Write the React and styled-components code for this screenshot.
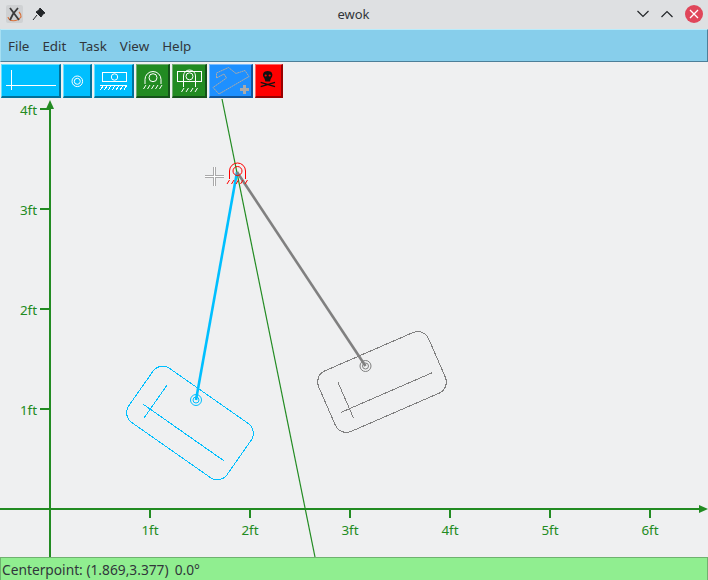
import React from 'react';
import styled, { createGlobalStyle } from 'styled-components';

const GlobalStyle = createGlobalStyle`
  html, body { margin: 0; padding: 0; background: #eff0f1; }
  body { font-family: "Noto Sans", sans-serif; overflow: hidden; }
`;

const Window = styled.div`
  width: 708px;
  height: 580px;
  display: flex;
  flex-direction: column;
  color: #31363b;
`;

const TitleBar = styled.header`
  height: 29px;
  flex: none;
  box-sizing: border-box;
  display: flex;
  align-items: center;
  padding: 0 5px 1px 6px;
  gap: 9px;
  background: #dee0e2;
`;

const Title = styled.div`
  flex: 1;
  text-align: center;
  font-size: 13px;
  padding-left: 24px;
`;

const WinButtons = styled.div`
  display: flex;
  align-items: center;
  gap: 12px;
`;

const MenuBar = styled.nav`
  height: 33px;
  flex: none;
  box-sizing: border-box;
  display: flex;
  align-items: center;
  gap: 13px;
  padding-left: 7px;
  background: #87ceeb;
  border: 1px solid #4d7f99;
  border-top: 1px solid #b9ecfb;
  border-left: 1px solid #a6dff2;
  font-size: 13.4px;
`;

const MenuItem = styled.span`
  display: block;
`;

const ToolBar = styled.div`
  height: 37px;
  flex: none;
  box-sizing: border-box;
  display: flex;
  gap: 2px;
  padding: 2px 0 1px 1px;
  background: #eff0f1;
`;

const Tool = styled.button`
  width: ${(p) => p.$w}px;
  height: 34px;
  flex: none;
  padding: 0;
  margin: 0;
  box-sizing: border-box;
  display: flex;
  align-items: center;
  justify-content: center;
  background: ${(p) => p.$bg};
  border-style: solid;
  border-width: 1px 2px 2px 1px;
  border-color: ${(p) => p.$light} ${(p) => p.$dark} ${(p) => p.$dark} ${(p) => p.$light};
`;

const Canvas = styled.svg`
  display: block;
  flex: 1;
  width: 708px;
  height: 458px;
  background: #eff0f1;
`;

const StatusBar = styled.footer`
  height: 23px;
  flex: none;
  box-sizing: border-box;
  display: flex;
  align-items: center;
  gap: 6px;
  padding-left: 1px;
  background: #90ee90;
  border: 1px solid #6fb26f;
  border-bottom: none;
  font-size: 13.75px;
`;

const AxisLabel = styled.text`
  font-family: "Noto Sans", sans-serif;
  font-size: 13.4px;
  fill: #228b22;
`;

const AppIcon = () => (
  <svg width="17" height="18" viewBox="0 0 17 18">
    <rect width="17" height="18" rx="2" fill="#cfd1d3" />
    <path d="M2 12 C3 17 11 17 15 12 C15 10 14 8 13 7" stroke="#d9713a" strokeWidth="1.200" fill="none" />
    <path d="M4 3 L13 15 M12 3 L7 9 L4 15" stroke="#3b3b3b" strokeWidth="1.800" fill="none" />
  </svg>
);

const PinIcon = () => (
  <svg width="14" height="14" viewBox="0 0 14 14">
    <path d="M8 1 L13 6 L11 7 L9 10 L4 5 L7 3 Z M5 8 L1 13" fill="#232629" stroke="#232629" strokeWidth="1" />
  </svg>
);

const ChevronIcon = ({ up }) => (
  <svg width="12" height="8" viewBox="0 0 12 8">
    <path d={up ? 'M0.5 7 L6 1.500 L11.500 7' : 'M0.500 1 L6 6.500 L11.500 1'} stroke="#232629" strokeWidth="1.200" fill="none" />
  </svg>
);

const CloseIcon = () => (
  <svg width="18" height="18" viewBox="0 0 18 18">
    <circle cx="9" cy="9" r="9" fill="#e0465a" />
    <path d="M5 5 L13 13 M13 5 L5 13" stroke="#fff" strokeWidth="1.300" />
  </svg>
);

const Hatch = ({ x, y, n, stroke = '#fff', step = 5 }) => (
  <>
    {Array.from({ length: n }, (_, i) => (
      <path key={i} d={`M${x + i * step} ${y} l-2.500 4`} stroke={stroke} fill="none" />
    ))}
  </>
);

const LineIcon = () => (
  <svg width="57" height="31" viewBox="0 0 57 31" shapeRendering="crispEdges">
    <path d="M4 20.500 H54 M9.500 5 V25" stroke="#fff" fill="none" />
  </svg>
);

const PivotIcon = () => (
  <svg width="26" height="31" viewBox="0 0 26 31">
    <circle cx="13.300" cy="16.300" r="5.300" stroke="#fff" fill="none" />
    <circle cx="13.300" cy="16.300" r="3" stroke="#fff" fill="none" />
  </svg>
);

const SliderIcon = () => (
  <svg width="37" height="31" viewBox="0 0 37 31" shapeRendering="crispEdges">
    <rect x="7.500" y="7.500" width="24" height="9" stroke="#fff" fill="none" />
    <circle cx="19.500" cy="12" r="3.200" stroke="#fff" fill="none" shapeRendering="auto" />
    <path d="M5 20.500 H32" stroke="#fff" />
    <Hatch x={8} y={21} n={7} step={3.900} />
  </svg>
);

const GroundIcon = () => (
  <svg width="31" height="31" viewBox="0 0 31 31">
    <path d="M8 19 V14.500 A8 8 0 0 1 24 14.500 V19" stroke="#fff" fill="none" />
    <circle cx="16" cy="12.700" r="4" stroke="#fff" fill="none" />
    <Hatch x={9} y={20} n={5} step={4} />
  </svg>
);

const FloatIcon = () => (
  <svg width="32" height="31" viewBox="0 0 32 31">
    <rect x="4.500" y="6.500" width="24" height="10" stroke="#fff" fill="none" />
    <path d="M10.500 22 V11 A6 6 0 0 1 22.500 11 V22" stroke="#fff" fill="none" />
    <circle cx="16.500" cy="11.300" r="3.500" stroke="#fff" fill="none" />
    <Hatch x={11} y={23} n={4} step={4.500} />
  </svg>
);

const AddBodyIcon = () => (
  <svg width="41" height="31" viewBox="0 0 41 31">
    <path
      d="M6.500 8 L18.500 2.500 L26 8.500 L35 5.500 L39 11.500 L9 29 L3 22.500 L16.500 13 L14 9 L6.500 13 Z"
      stroke="#aaa"
      fill="none"
      strokeDasharray="2 0.400"
    />
    <path d="M30 24.500 H39 M34.500 20 V29" stroke="#aaa" strokeWidth="3" />
  </svg>
);

const SkullIcon = () => (
  <svg width="25" height="31" viewBox="0 0 25 31">
    <path d="M11.700 6 C7.500 6 6.500 9 7.300 11.500 C8 13 9 13.500 9.300 16.500 H14.100 C14.400 13.500 15.400 13 16.100 11.500 C16.900 9 15.900 6 11.700 6 Z" fill="#111" />
    <circle cx="9.700" cy="10.500" r="1.100" fill="#f00" />
    <circle cx="13.700" cy="10.500" r="1.100" fill="#f00" />
    <path d="M4.700 17.300 L19 21.700 M19 17.300 L4.700 21.700" stroke="#111" strokeWidth="1.300" />
  </svg>
);

const tools = [
  { w: 60, bg: '#00bfff', light: '#66e0ff', dark: '#00719a', icon: <LineIcon /> },
  { w: 29, bg: '#00bfff', light: '#66e0ff', dark: '#00719a', icon: <PivotIcon /> },
  { w: 40, bg: '#00bfff', light: '#66e0ff', dark: '#00719a', icon: <SliderIcon /> },
  { w: 34, bg: '#228b22', light: '#70ad70', dark: '#14521a', icon: <GroundIcon /> },
  { w: 35, bg: '#228b22', light: '#70ad70', dark: '#14521a', icon: <FloatIcon /> },
  { w: 44, bg: '#1e90ff', light: '#78bcff', dark: '#125599', icon: <AddBodyIcon /> },
  { w: 28, bg: '#ff0000', light: '#ff6666', dark: '#990000', icon: <SkullIcon /> },
];

// origin of the plot in canvas coordinates, 100px to the foot
const ox = 50;
const oy = 410;

const Axes = () => (
  <g shapeRendering="crispEdges" stroke="#228b22" strokeWidth="2" fill="none">
    <path d={`M0 ${oy} H700`} />
    <path d={`M${ox} 8 V458`} />
    {[1, 2, 3, 4, 5, 6].map((n) => (
      <path key={n} d={`M${ox + n * 100} ${oy} V${oy + 9}`} />
    ))}
    {[1, 2, 3, 4].map((n) => (
      <path key={n} d={`M${ox} ${oy - n * 100} H${ox - 10}`} />
    ))}
    <path d={`M${ox} 1 L${ox + 4} 10 H${ox - 4} Z`} fill="#228b22" stroke="none" shapeRendering="auto" />
    <path d={`M708 ${oy} L699 ${oy - 4} V${oy + 4} Z`} fill="#228b22" stroke="none" shapeRendering="auto" />
  </g>
);

const Labels = () => (
  <>
    {[1, 2, 3, 4, 5, 6].map((n) => (
      <AxisLabel key={n} x={ox + n * 100} y={oy + 26} textAnchor="middle">{n}ft</AxisLabel>
    ))}
    {[1, 2, 3, 4].map((n) => (
      <AxisLabel key={n} x={ox - 13} y={oy - n * 100 + 6} textAnchor="end">{n}ft</AxisLabel>
    ))}
  </>
);

const Body = ({ cx, cy, angle, color }) => (
  <g transform={`translate(${cx} ${cy}) rotate(${angle})`} stroke={color} fill="none" shapeRendering="crispEdges">
    <rect x="-60" y="-33" width="120" height="66" rx="12" />
    <path d="M-50 11.500 H49.500 M-40.500 -18 V22" />
  </g>
);

const Joint = ({ x, y, color }) => (
  <g stroke={color} fill="none">
    <circle cx={x} cy={y} r="5.500" />
    <circle cx={x} cy={y} r="3" />
  </g>
);

const Ground = ({ x, y }) => (
  <g stroke="#f00" fill="none">
    <path d={`M${x - 8} ${y + 8} V${y} A8 8 0 0 1 ${x + 8} ${y} V${y + 8}`} />
    <circle cx={x} cy={y} r="4.500" />
    <Hatch x={x - 8} y={y + 9} n={5} stroke="#f00" step={4.500} />
  </g>
);

const Crosshair = ({ x, y }) => (
  <g shapeRendering="crispEdges">
    <path d={`M${x - 9} ${y} H${x + 10} M${x} ${y - 9} V${y + 10}`} stroke="#555" strokeWidth="3" opacity="0.450" />
    <path d={`M${x - 9} ${y} H${x + 10} M${x} ${y - 9} V${y + 10}`} stroke="#fff" strokeWidth="1" />
  </g>
);

const App = () => (
  <Window>
    <GlobalStyle />
    <TitleBar>
      <AppIcon />
      <PinIcon />
      <Title>ewok</Title>
      <WinButtons>
        <ChevronIcon />
        <ChevronIcon up />
        <CloseIcon />
      </WinButtons>
    </TitleBar>
    <MenuBar>
      {['File', 'Edit', 'Task', 'View', 'Help'].map((m) => (
        <MenuItem key={m}>{m}</MenuItem>
      ))}
    </MenuBar>
    <ToolBar>
      {tools.map((t, i) => (
        <Tool key={i} type="button" $w={t.w} $bg={t.bg} $light={t.light} $dark={t.dark}>
          {t.icon}
        </Tool>
      ))}
    </ToolBar>
    <Canvas viewBox="0 0 708 458">
      <Axes />
      <Labels />
      <path d="M222 0 L315 458" stroke="#228b22" strokeWidth="1.200" fill="none" />
      <Body cx={190} cy={324} angle={35} color="#00bfff" />
      <Body cx={382} cy={283} angle={-23.5} color="#808080" />
      <path d="M237 73 L196 301" stroke="#00bfff" strokeWidth="2.600" />
      <path d="M237 73 L365.500 267" stroke="#808080" strokeWidth="2.600" />
      <Joint x={196} y={301} color="#00bfff" />
      <Joint x={365.5} y={267} color="#808080" />
      <Ground x={237.5} y={72} />
      <Crosshair x={214} y={77} />
    </Canvas>
    <StatusBar>
      <span>Centerpoint: (1.869,3.377)</span>
      <span>0.0°</span>
    </StatusBar>
  </Window>
);

export default App;
